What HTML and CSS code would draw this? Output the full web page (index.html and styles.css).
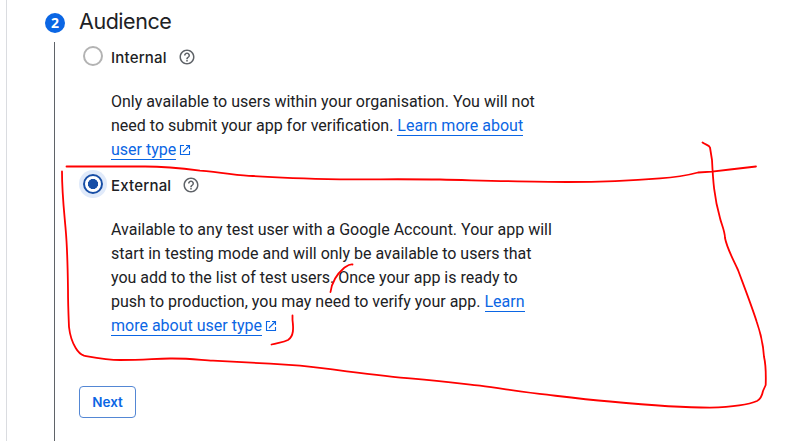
FILE: index.html
```html
<!DOCTYPE html>
<html lang="en-GB">
<head>
<meta charset="utf-8">
<title>Audience</title>
<link rel="stylesheet" href="styles.css">
</head>
<body>
<svg class="defs" width="0" height="0">
  <symbol id="help" viewBox="0 0 24 24"><path d="M11 18h2v-2h-2v2zm1-16C6.480 2 2 6.480 2 12s4.480 10 10 10 10-4.480 10-10S17.520 2 12 2zm0 18c-4.410 0-8-3.590-8-8s3.590-8 8-8 8 3.590 8 8-3.590 8-8 8zm0-14c-2.210 0-4 1.790-4 4h2c0-1.100.9-2 2-2s2 .9 2 2c0 2-3 1.750-3 5h2c0-2.250 3-2.500 3-5 0-2.210-1.790-4-4-4z"/></symbol>
  <symbol id="launch" viewBox="0 0 12 12"><path d="M5 1.500H1.500v9h9V7M7 1.500h3.500V5M10.500 1.500L4 8" fill="none" stroke="currentColor" stroke-width="1.100"/></symbol>
</svg>
<main class="panel">
  <header class="step-head">
    <span class="badge">2</span>
    <h2>Audience</h2>
  </header>
  <section class="step-body">
    <div class="option">
      <span class="radio"></span>
      <span class="label">Internal</span>
      <svg class="help"><use href="#help"/></svg>
    </div>
    <p class="hint first">Only available to users within your organisation. You will not<br>need to submit your app for verification. <a>Learn more about</a><br><a>user type</a><svg class="launch"><use href="#launch"/></svg></p>
    <div class="option">
      <span class="radio checked"></span>
      <span class="label">External</span>
      <svg class="help"><use href="#help"/></svg>
    </div>
    <p class="hint second">Available to any test user with a Google Account. Your app will<br>start in testing mode and will only be available to users that<br>you add to the list of test users. Once your app is ready to<br>push to production, you may need to verify your app. <a>Learn</a><br><a>more about user type</a><svg class="launch"><use href="#launch"/></svg></p>
    <button class="next">Next</button>
  </section>
</main>
<svg class="ink" viewBox="0 0 800 441">
  <path d="M66.500 166.500H145C165 166.500 183 168.500 200 170.700C227 173 240 176 253 176C280 177.800 297 178.500 340 179.300C380 179.400 410 179 440 179.500C500 181 530 182 567 182C610 182 640 180 660 178.300C675 177.500 687 175.500 698 172.500L712 171.700L730 169.500L756 166.500"/>
  <path d="M62 171.500C62 195 64.500 215 65.700 230C67.500 250 67.700 267 68 290C68 305 68.500 315 69 327C70 336 72 342 75.700 348C78 352 81 354.500 84 355.700C100 358.500 108 360 120 360C145 360 155 358.500 170 358.500C190 358.300 200 360 213 360.700L270 363.700L300 365.700C340 370 375 375.500 413 378.700C440 381 460 383.500 480 385.700C505 389 525 392.500 547 394.700C570 397.500 585 399.500 610 401.500C640 404.300 680 407.700 710 407.700C730 407 747 405.500 757 401C761 399 762 396 763 391L765.700 385C766 375 766 365 764 356.700C763 343 760 331 756.700 321.700C752 307 748 296.700 738 270C731 255 727 248 725 238C725 231 721 223 720 218C714 197 713 180 712 160L710 147.500C709 145 706 145 702.500 142.500"/>
  <path d="M352.500 264.500C349 264 347 266 344 268C337 274 332 281 330.500 292"/>
  <path d="M292.500 315.500V320C293.500 328 294 336 288 340C283 342.500 278 342.500 271.500 344.500"/>
</svg>
</body>
</html>
```
FILE: styles.css
```css
* { box-sizing: border-box; }
body {
  margin: 0;
  height: 441px;
  overflow: hidden;
  background: #fff;
  color: #202124;
  font: 16px/24px Roboto, sans-serif;
}
.defs { position: absolute; }
.panel {
  display: flex;
  flex-direction: column;
  height: 441px;
  margin-left: 6px;
  padding-left: 38px;
  border-left: 1px solid #dadce0;
}
.step-head {
  display: flex;
  align-items: center;
  height: 42px;
  gap: 14px;
}
.badge {
  width: 20px;
  height: 20px;
  margin-top: 4px;
  border-radius: 50%;
  background: #0b66e4;
  color: #fff;
  font: 700 14px/20px "Open Sans", sans-serif;
  text-align: center;
}
h2 {
  margin: 0;
  font: 400 21.5px/28px Inter, sans-serif;
  letter-spacing: -0.45px;
}
.step-body {
  flex: 1;
  margin-left: 9px;
  padding: 1px 0 0 24px;
  border-left: 1px solid #5f6368;
}
.option {
  display: flex;
  align-items: center;
  height: 24px;
  margin-top: 2px;
}
.radio {
  width: 20px;
  height: 20px;
  margin: 0 8px 2px 4px;
  border: 2px solid #b3b3b3;
  border-radius: 50%;
}
.checked {
  border-color: #174ea6;
  background: radial-gradient(circle, #174ea6 4.800px, #fff 5.300px);
  box-shadow: 0 0 0 4px #e0eafa;
}
.label {
  margin-top: 2px;
  font: 500 15px/24px Inter, sans-serif;
  letter-spacing: 0.2px;
}
.help {
  width: 18px;
  height: 18px;
  margin-left: 11px;
  fill: #5f6368;
}
.hint {
  margin: 0 0 0 32px;
  white-space: nowrap;
}
.first { padding: 21px 0 9px; }
.second { padding: 21px 0 48px; }
a {
  color: #0b66e4;
  border-bottom: 1px solid #0b66e4;
}
.launch {
  width: 12px;
  height: 12px;
  margin-left: 3px;
  vertical-align: -1px;
  color: #0b66e4;
}
.next {
  display: block;
  width: 57px;
  height: 32px;
  padding: 0;
  border: 1px solid #5487d4;
  border-radius: 4px;
  background: #fff;
  color: #0b66e4;
  font: 600 13.5px/30px Inter, sans-serif;
}
.ink {
  position: absolute;
  inset: 0;
  width: 800px;
  height: 441px;
  fill: none;
  stroke: #f00;
  stroke-width: 1.800;
  stroke-linecap: round;
  stroke-linejoin: round;
}
```
